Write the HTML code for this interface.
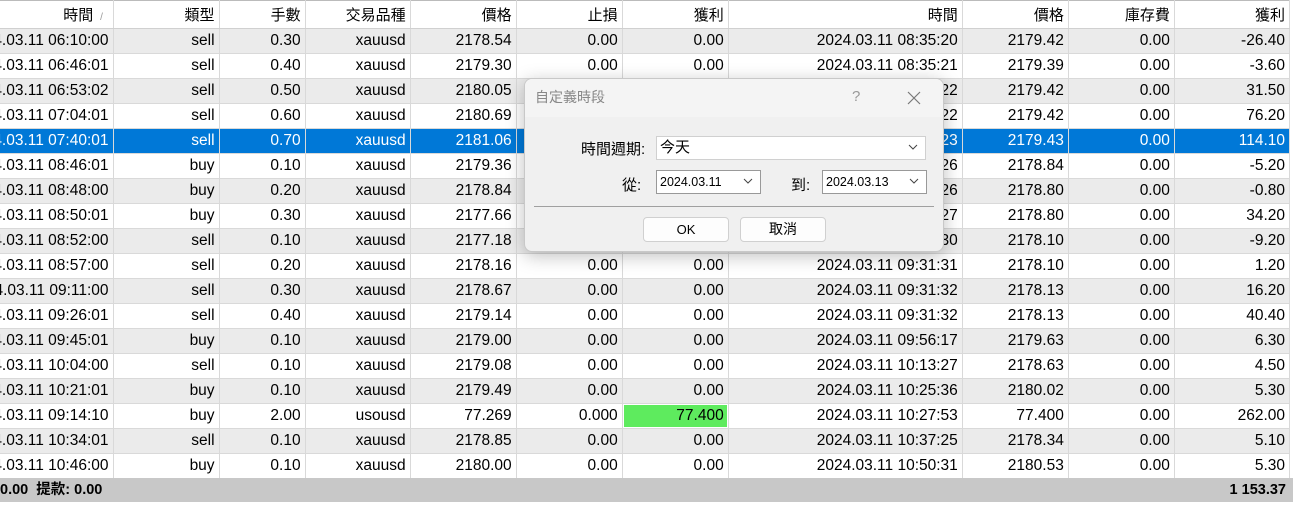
<!DOCTYPE html>
<html><head><meta charset="utf-8"><style>
*{margin:0;padding:0;box-sizing:border-box}
body{width:1293px;height:507px;overflow:hidden;background:#fff;font-family:"Liberation Sans","Noto Sans CJK TC",sans-serif;font-size:15.5px;color:#000;position:relative}
table{position:absolute;left:0;top:0;border-collapse:collapse;table-layout:fixed;width:1290px}
td,th{height:25px;text-align:right;padding:0 4px 0 0;border-right:1px solid #d9d9d9;border-bottom:1px solid #d9d9d9;white-space:nowrap;overflow:hidden;font-weight:normal}
td:first-child{direction:rtl;text-align:left}
td:first-child span{direction:ltr;unicode-bidi:isolate}
th{height:28px;border-top:1px solid #bbb;border-bottom:1px solid #d0d0d0;font-size:15px}
tr.g td{background:#ebebeb}
tr.s td{background:#0078d7;color:#fff}
td.gr{background:#5eeb5e!important;box-shadow:inset 0 0 0 1px #fff}
.foot{position:absolute;left:0;top:478px;width:1293px;height:24px;background:#c8c8c8;font-weight:bold;line-height:24px;font-size:14.5px}
.dlg{position:absolute;left:524px;top:78px;width:420px;height:174px;background:#f0f0f0;border:1px solid #c8c8c8;border-radius:8px;box-shadow:0 4px 18px rgba(0,0,0,.25);overflow:hidden}
.tb{height:38px;background:#f4f4f4;color:#888;line-height:36px;padding-left:10px;font-size:14px;position:relative}
.box{position:absolute;background:#fff;border:1px solid #999;font-size:14px;line-height:22px;padding-left:3px}
.btn{position:absolute;top:138px;width:86px;height:25px;background:#fdfdfd;border:1px solid #d0d0d0;border-radius:4px;text-align:center;line-height:23px;font-size:13px}
.chev{position:absolute;right:6px;top:4px;width:12px;height:12px}
</style></head><body>
<table>
<colgroup><col style="width:113px"><col style="width:106px"><col style="width:86px"><col style="width:105px"><col style="width:106px"><col style="width:106px"><col style="width:106px"><col style="width:234px"><col style="width:106px"><col style="width:106px"><col style="width:115px"></colgroup>
<tr><th>時間 <span style="color:#999;font-size:10px">&nbsp;/&nbsp;&nbsp;</span></th><th>類型</th><th>手數</th><th>交易品種</th><th>價格</th><th>止損</th><th>獲利</th><th>時間</th><th>價格</th><th>庫存費</th><th>獲利</th></tr>
<tr class="g"><td><span>2024.03.11 06:10:00</span></td><td>sell</td><td>0.30</td><td>xauusd</td><td>2178.54</td><td>0.00</td><td>0.00</td><td>2024.03.11 08:35:20</td><td>2179.42</td><td>0.00</td><td>-26.40</td></tr>
<tr><td><span>2024.03.11 06:46:01</span></td><td>sell</td><td>0.40</td><td>xauusd</td><td>2179.30</td><td>0.00</td><td>0.00</td><td>2024.03.11 08:35:21</td><td>2179.39</td><td>0.00</td><td>-3.60</td></tr>
<tr class="g"><td><span>2024.03.11 06:53:02</span></td><td>sell</td><td>0.50</td><td>xauusd</td><td>2180.05</td><td>0.00</td><td>0.00</td><td>2024.03.11 08:35:22</td><td>2179.42</td><td>0.00</td><td>31.50</td></tr>
<tr><td><span>2024.03.11 07:04:01</span></td><td>sell</td><td>0.60</td><td>xauusd</td><td>2180.69</td><td>0.00</td><td>0.00</td><td>2024.03.11 08:35:22</td><td>2179.42</td><td>0.00</td><td>76.20</td></tr>
<tr class="s"><td><span>2024.03.11 07:40:01</span></td><td>sell</td><td>0.70</td><td>xauusd</td><td>2181.06</td><td>0.00</td><td>0.00</td><td>2024.03.11 08:35:23</td><td>2179.43</td><td>0.00</td><td>114.10</td></tr>
<tr><td><span>2024.03.11 08:46:01</span></td><td>buy</td><td>0.10</td><td>xauusd</td><td>2179.36</td><td>0.00</td><td>0.00</td><td>2024.03.11 08:54:26</td><td>2178.84</td><td>0.00</td><td>-5.20</td></tr>
<tr class="g"><td><span>2024.03.11 08:48:00</span></td><td>buy</td><td>0.20</td><td>xauusd</td><td>2178.84</td><td>0.00</td><td>0.00</td><td>2024.03.11 08:54:26</td><td>2178.80</td><td>0.00</td><td>-0.80</td></tr>
<tr><td><span>2024.03.11 08:50:01</span></td><td>buy</td><td>0.30</td><td>xauusd</td><td>2177.66</td><td>0.00</td><td>0.00</td><td>2024.03.11 08:54:27</td><td>2178.80</td><td>0.00</td><td>34.20</td></tr>
<tr class="g"><td><span>2024.03.11 08:52:00</span></td><td>sell</td><td>0.10</td><td>xauusd</td><td>2177.18</td><td>0.00</td><td>0.00</td><td>2024.03.11 09:01:30</td><td>2178.10</td><td>0.00</td><td>-9.20</td></tr>
<tr><td><span>2024.03.11 08:57:00</span></td><td>sell</td><td>0.20</td><td>xauusd</td><td>2178.16</td><td>0.00</td><td>0.00</td><td>2024.03.11 09:31:31</td><td>2178.10</td><td>0.00</td><td>1.20</td></tr>
<tr class="g"><td><span>2024.03.11 09:11:00</span></td><td>sell</td><td>0.30</td><td>xauusd</td><td>2178.67</td><td>0.00</td><td>0.00</td><td>2024.03.11 09:31:32</td><td>2178.13</td><td>0.00</td><td>16.20</td></tr>
<tr><td><span>2024.03.11 09:26:01</span></td><td>sell</td><td>0.40</td><td>xauusd</td><td>2179.14</td><td>0.00</td><td>0.00</td><td>2024.03.11 09:31:32</td><td>2178.13</td><td>0.00</td><td>40.40</td></tr>
<tr class="g"><td><span>2024.03.11 09:45:01</span></td><td>buy</td><td>0.10</td><td>xauusd</td><td>2179.00</td><td>0.00</td><td>0.00</td><td>2024.03.11 09:56:17</td><td>2179.63</td><td>0.00</td><td>6.30</td></tr>
<tr><td><span>2024.03.11 10:04:00</span></td><td>sell</td><td>0.10</td><td>xauusd</td><td>2179.08</td><td>0.00</td><td>0.00</td><td>2024.03.11 10:13:27</td><td>2178.63</td><td>0.00</td><td>4.50</td></tr>
<tr class="g"><td><span>2024.03.11 10:21:01</span></td><td>buy</td><td>0.10</td><td>xauusd</td><td>2179.49</td><td>0.00</td><td>0.00</td><td>2024.03.11 10:25:36</td><td>2180.02</td><td>0.00</td><td>5.30</td></tr>
<tr><td><span>2024.03.11 09:14:10</span></td><td>buy</td><td>2.00</td><td>usousd</td><td>77.269</td><td>0.000</td><td class="gr">77.400</td><td>2024.03.11 10:27:53</td><td>77.400</td><td>0.00</td><td>262.00</td></tr>
<tr class="g"><td><span>2024.03.11 10:34:01</span></td><td>sell</td><td>0.10</td><td>xauusd</td><td>2178.85</td><td>0.00</td><td>0.00</td><td>2024.03.11 10:37:25</td><td>2178.34</td><td>0.00</td><td>5.10</td></tr>
<tr><td><span>2024.03.11 10:46:00</span></td><td>buy</td><td>0.10</td><td>xauusd</td><td>2180.00</td><td>0.00</td><td>0.00</td><td>2024.03.11 10:50:31</td><td>2180.53</td><td>0.00</td><td>5.30</td></tr>
</table>
<div class="foot"><span style="position:absolute;left:0">0.00&nbsp; 提款: 0.00</span><span style="position:absolute;right:7px">1 153.37</span></div>
<div class="dlg">
<div class="tb">自定義時段<span style="position:absolute;left:327px;top:0;color:#999;font-size:15px">?</span>
<svg style="position:absolute;left:382px;top:12px" width="14" height="14"><path d="M1 1L13 13M13 1L1 13" stroke="#777" stroke-width="1.2"/></svg></div>
<div style="position:absolute;left:56px;top:59px;font-size:15px">時間週期:</div>
<div class="box" style="left:131px;top:57px;width:270px;height:24px;border-color:#d0d0d0;font-size:15px">今天<svg class="chev" viewBox="0 0 12 12"><path d="M2 4L6 8L10 4" fill="none" stroke="#444"/></svg></div>
<div style="position:absolute;left:97px;top:95px;font-size:15px">從:</div>
<div class="box" style="left:131px;top:91px;width:105px;height:24px;font-size:12.5px">2024.03.11<svg class="chev" viewBox="0 0 12 12"><path d="M2 4L6 8L10 4" fill="none" stroke="#444"/></svg></div>
<div style="position:absolute;left:266px;top:95px;font-size:15px">到:</div>
<div class="box" style="left:297px;top:91px;width:105px;height:24px;font-size:12.5px">2024.03.13<svg class="chev" viewBox="0 0 12 12"><path d="M2 4L6 8L10 4" fill="none" stroke="#444"/></svg></div>
<div style="position:absolute;left:9px;top:127px;width:400px;height:1px;background:#a0a0a0"></div>
<div class="btn" style="left:118px">OK</div>
<div class="btn" style="left:215px;font-size:14px">取消</div>
</div>
</body></html>
